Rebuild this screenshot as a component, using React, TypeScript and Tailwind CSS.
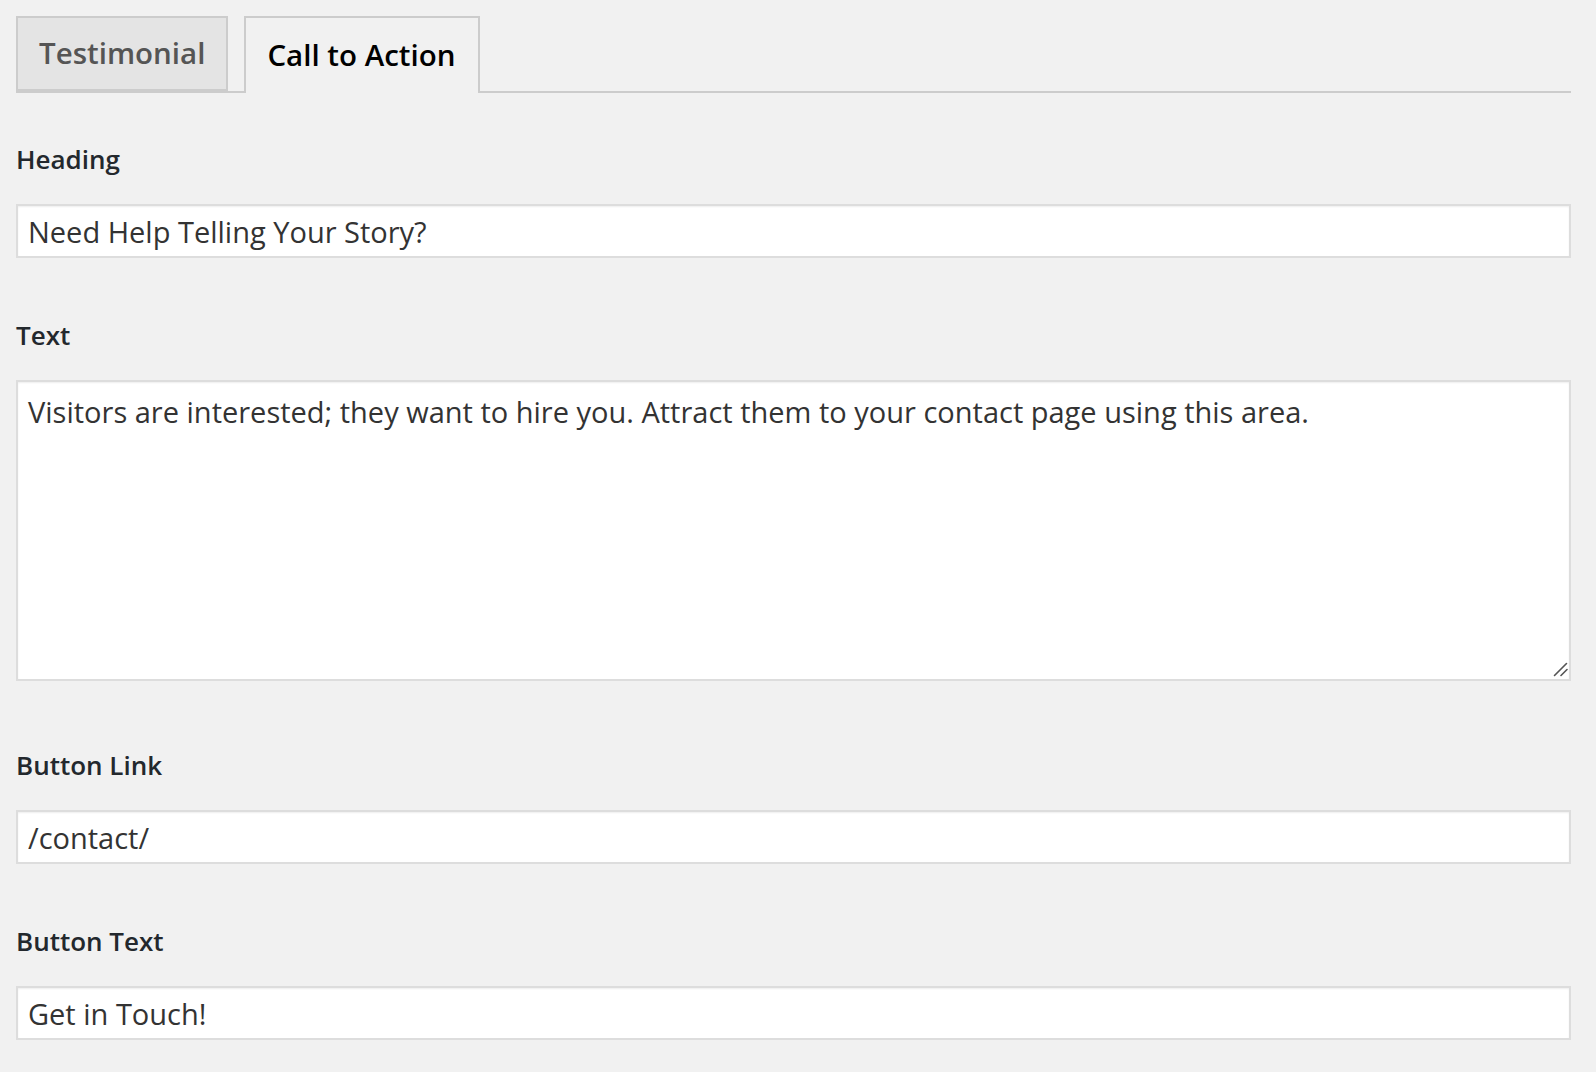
import React from "react";

const fields = [
  { label: "Heading", value: "Need Help Telling Your Story?" },
  { label: "Text", value: "Visitors are interested; they want to hire you. Attract them to your contact page using this area.", multi: true },
  { label: "Button Link", value: "/contact/" },
  { label: "Button Text", value: "Get in Touch!" },
];

const App = () => {
  return (
    <div className="min-h-screen bg-[#f1f1f1] pl-4 pr-[25px] pt-4 font-['Open_Sans',sans-serif] text-[#333]">
      <div className="flex gap-4 border-b-2 border-[#ccc]">
        <div className="-mb-[2px] flex h-[75px] items-center border-2 border-[#ccc] bg-[#e4e4e4] px-[21px] text-[29.5px] font-semibold text-[#555]">
          Testimonial
        </div>
        <div className="-mb-[2px] flex h-[77px] items-center border-2 border-b-0 border-[#ccc] bg-[#f1f1f1] pl-[21px] pr-[23px] text-[29.5px] font-semibold text-black">
          Call to Action
        </div>
      </div>

      <div className="pt-[49px]">
        {fields.map((f) => (
          <div key={f.label} className="pb-[60px]">
            <label className="block text-[26px] font-semibold leading-[34px] text-[#23282d]">
              {f.label}
            </label>
            {f.multi ? (
              <div className="relative mt-[28px] mb-[7px]">
                <textarea
                  readOnly
                  defaultValue={f.value}
                  className="block h-[301px] w-full resize-none border-2 border-[#ddd] bg-white px-[10px] py-[10px] text-[29px] leading-[40px] text-[#333] shadow-[inset_0_1px_2px_rgba(0,0,0,0.07)] outline-none"
                />
                <svg
                  className="pointer-events-none absolute bottom-[3px] right-[3px]"
                  width="16"
                  height="16"
                  viewBox="0 0 16 16"
                >
                  <line x1="14.5" y1="1.5" x2="2.5" y2="13.5" stroke="#555" strokeWidth="1.6" strokeLinecap="round" />
                  <line x1="15" y1="7.5" x2="9" y2="13.5" stroke="#555" strokeWidth="1.6" strokeLinecap="round" />
                </svg>
              </div>
            ) : (
              <input
                readOnly
                defaultValue={f.value}
                className="mt-[28px] block h-[54px] w-full border-2 border-[#ddd] bg-white px-[10px] text-[29px] text-[#333] shadow-[inset_0_1px_2px_rgba(0,0,0,0.07)] outline-none"
              />
            )}
          </div>
        ))}
      </div>
    </div>
  );
};

export default App;
